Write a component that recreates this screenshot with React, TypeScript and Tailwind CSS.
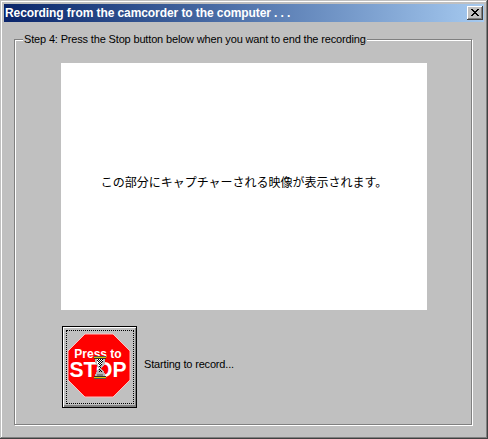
export default function App() {
  return (
    <div className="w-[488px] h-[439px] overflow-hidden bg-[#404040] pr-px pb-px">
      <div className="h-full w-full bg-[#c0c0c0] pt-px pl-px">
        <div className="h-full w-full bg-[#808080] pr-px pb-px">
          <div className="h-full w-full bg-white pt-px pl-px">
            <div className="flex h-full w-full flex-col bg-[#c0c0c0] p-[2px]">
              <div className="flex h-[18px] shrink-0 items-center justify-between bg-gradient-to-r from-[#0a246a] to-[#a6caf0] pl-px pr-px">
                <span className="font-['Liberation_Sans',sans-serif] text-[12px] font-bold leading-none tracking-[-0.08px] whitespace-nowrap text-white">
                  Recording from the camcorder to the computer . . .
                </span>
                <CloseButton />
              </div>
              <div className="min-h-0 flex-1 pl-[10px] pr-[12px] pt-[17px] pb-[10px]">
                <GroupBox />
              </div>
            </div>
          </div>
        </div>
      </div>
    </div>
  );
}

function CloseButton() {
  return (
    <div className="h-[14px] w-[16px] bg-[#404040] pr-px pb-px">
      <div className="h-full w-full bg-white pt-px pl-px">
        <div className="h-full w-full bg-[#808080] pr-px pb-px">
          <div className="flex h-full w-full items-center justify-center bg-[#c0c0c0]">
            <svg width="8" height="7" viewBox="0 0 8 7" shapeRendering="crispEdges">
              <path d="M0 0h2v1h-2zM6 0h2v1h-2zM1 1h2v1h-2zM5 1h2v1h-2zM2 2h4v1h-4zM3 3h2v1h-2zM2 4h4v1h-4zM1 5h2v1h-2zM5 5h2v1h-2zM0 6h2v1h-2zM6 6h2v1h-2z" fill="#000" />
            </svg>
          </div>
        </div>
      </div>
    </div>
  );
}

function GroupBox() {
  return (
    <div className="relative h-full w-full border border-[#808080] shadow-[inset_1px_1px_0_#fff,1px_1px_0_#fff] pl-[46px] pt-[23px]">
      <span className="absolute left-[8px] top-[-7px] bg-[#c0c0c0] px-px font-['Liberation_Sans',sans-serif] text-[11px] leading-[13px] tracking-[-0.16px] whitespace-nowrap text-black">
        Step 4: Press the Stop button below when you want to end the recording
      </span>
      <div className="flex h-[247px] w-[366px] items-center justify-center bg-white pb-[10px]">
        <span className="font-['Noto_Sans_CJK_JP',sans-serif] text-[12px] leading-none text-black">
          この部分にキャプチャーされる映像が表示されます。
        </span>
      </div>
      <div className="mt-[16px] flex items-center gap-[7px] pl-px">
        <StopButton />
        <span className="mb-[6px] font-['Liberation_Sans',sans-serif] text-[11px] leading-[13px] tracking-[-0.17px] text-black">Starting to record...</span>
      </div>
    </div>
  );
}

function StopButton() {
  return (
    <div className="h-[82px] w-[75px] shrink-0 border border-black bg-white pt-px pl-px">
      <div className="h-full w-full border-r border-b-2 border-[#808080] bg-[#c0c0c0] pt-[2px] pl-[2px] pr-px pb-px">
        <div className="h-full w-full border border-dotted border-black pt-[2px]">
          <svg width="65" height="66" viewBox="0 0 65 66" className="block">
            <polygon points="18,1 46,1 63,18 63,47 46,64 18,64 1,47 1,18" fill="#ff0000" stroke="#ffc0c0" strokeWidth="1" />
            <text x="31" y="25" textAnchor="middle" fontFamily="'Liberation Sans',sans-serif" fontWeight="700" fontSize="12" fill="#fff">Press to</text>
            <text x="31" y="44" textAnchor="middle" textLength="57" lengthAdjust="spacingAndGlyphs" fontFamily="'Liberation Sans',sans-serif" fontWeight="700" fontSize="22" fill="#fff">STOP</text>
            <g shapeRendering="crispEdges">
              <rect x="27" y="23" width="12" height="1" fill="#505050" />
              <rect x="27" y="24" width="12" height="1" fill="#d8c000" />
              <rect x="27" y="25" width="12" height="1" fill="#303030" />
              <path d="M28 26h10v4l-1 1v1l-1 1v1l-2 1v1l2 1v1l1 1v1l1 1v5h-10v-5l1-1v-1l1-1v-1l2-1v-1l-2-1v-1l-1-1v-1l-1-1z" fill="#b8b8b8" />
              <path d="M30 26h6v3h-1v2h-1v2h-1v2h-1v-2h-1v-2h-1z" fill="#ffffff" />
              <path d="M31 26h1v1h-1zM33 26h1v1h-1zM35 26h1v1h-1zM30 27h1v1h-1zM32 27h1v1h-1zM34 27h1v1h-1zM31 28h1v1h-1zM33 28h1v1h-1zM35 28h1v1h-1zM32 29h1v1h-1zM34 29h1v1h-1zM31 30h1v1h-1zM33 30h1v1h-1zM32 31h1v1h-1zM34 31h1v1h-1zM33 32h1v1h-1zM32 33h1v1h-1zM33 34h1v1h-1zM32 36h1v1h-1zM33 37h1v1h-1zM32 38h1v1h-1zM34 38h1v1h-1z" fill="#000" />
              <path d="M30 41h6v2h-6z" fill="#808080" />
              <rect x="27" y="43" width="12" height="1" fill="#303030" />
              <rect x="27" y="44" width="12" height="1" fill="#d8c000" />
              <rect x="27" y="45" width="12" height="1" fill="#505050" />
            </g>
          </svg>
        </div>
      </div>
    </div>
  );
}
